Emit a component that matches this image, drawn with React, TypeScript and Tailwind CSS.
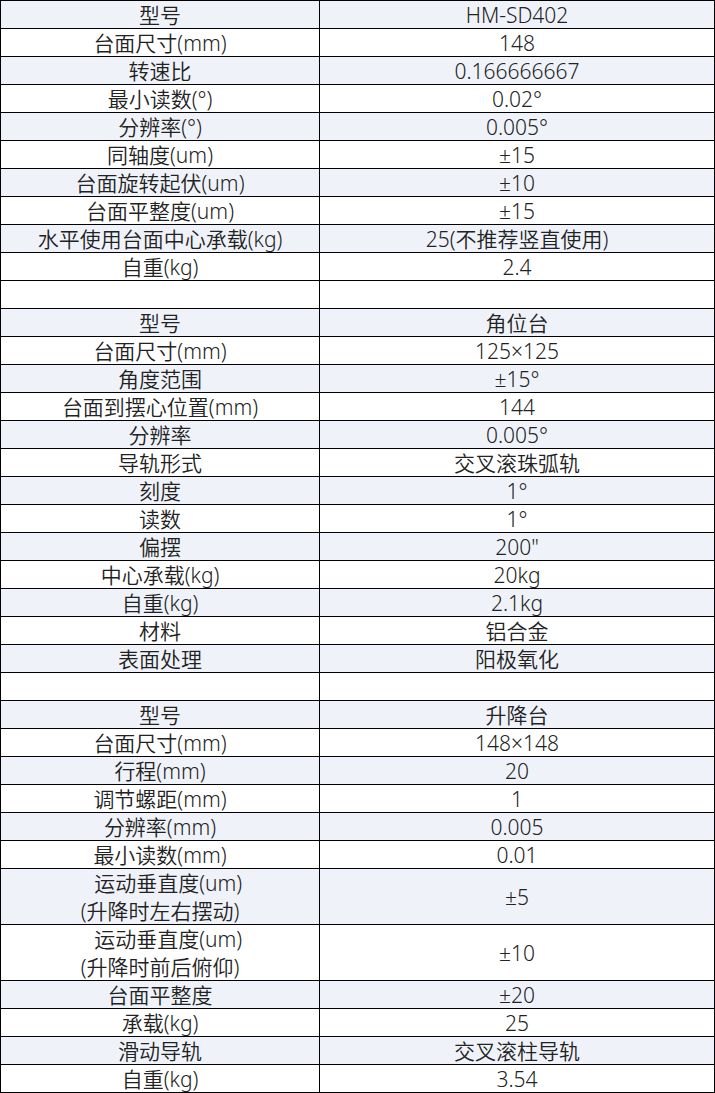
import React from "react";

type Row = { k: string[]; v: string; tall?: boolean; bg: boolean };

const sec = (items: [string[] | string, string][]): Row[] =>
  items.map(([k, v], i) => ({
    k: Array.isArray(k) ? k : [k],
    v,
    tall: Array.isArray(k) && k.length > 1,
    bg: i % 2 === 0,
  }));

const empty: Row = { k: [""], v: "", bg: false };

const rows: Row[] = [
  ...sec([
    ["型号", "HM-SD402"],
    ["台面尺寸(mm)", "148"],
    ["转速比", "0.166666667"],
    ["最小读数(°)", "0.02°"],
    ["分辨率(°)", "0.005°"],
    ["同轴度(um)", "±15"],
    ["台面旋转起伏(um)", "±10"],
    ["台面平整度(um)", "±15"],
    ["水平使用台面中心承载(kg)", "25(不推荐竖直使用)"],
    ["自重(kg)", "2.4"],
  ]),
  empty,
  ...sec([
    ["型号", "角位台"],
    ["台面尺寸(mm)", "125×125"],
    ["角度范围", "±15°"],
    ["台面到摆心位置(mm)", "144"],
    ["分辨率", "0.005°"],
    ["导轨形式", "交叉滚珠弧轨"],
    ["刻度", "1°"],
    ["读数", "1°"],
    ["偏摆", "200\""],
    ["中心承载(kg)", "20kg"],
    ["自重(kg)", "2.1kg"],
    ["材料", "铝合金"],
    ["表面处理", "阳极氧化"],
  ]),
  empty,
  ...sec([
    ["型号", "升降台"],
    ["台面尺寸(mm)", "148×148"],
    ["行程(mm)", "20"],
    ["调节螺距(mm)", "1"],
    ["分辨率(mm)", "0.005"],
    ["最小读数(mm)", "0.01"],
    [["\u00a0\u00a0\u00a0运动垂直度(um)", "(升降时左右摆动)"], "±5"],
    [["\u00a0\u00a0\u00a0运动垂直度(um)", "(升降时前后俯仰)"], "±10"],
    ["台面平整度", "±20"],
    ["承载(kg)", "25"],
    ["滑动导轨", "交叉滚柱导轨"],
    ["自重(kg)", "3.54"],
  ]),
];

export default function App() {
  return (
    <div
      className="w-[715px] border-l border-t border-black bg-white text-[21px] font-[350] text-[#222]"
      style={{ fontFamily: '"Noto Sans", "Noto Sans CJK SC", sans-serif' }}
    >
      {rows.map((r, i) => (
        <div
          key={i}
          className={`flex ${r.tall ? "h-[56px]" : "h-[28px]"} ${r.bg ? "bg-[#eff3f9]" : "bg-white"}`}
        >
          <div className="flex w-[319px] flex-col items-center justify-center border-b border-r border-black leading-[28px] whitespace-pre">
            {r.k.map((t, j) => (
              <span key={j}>{t}</span>
            ))}
          </div>
          <div className="flex w-[395px] items-center justify-center border-b border-r border-black leading-[28px] whitespace-pre">
            {r.v}
          </div>
        </div>
      ))}
    </div>
  );
}
